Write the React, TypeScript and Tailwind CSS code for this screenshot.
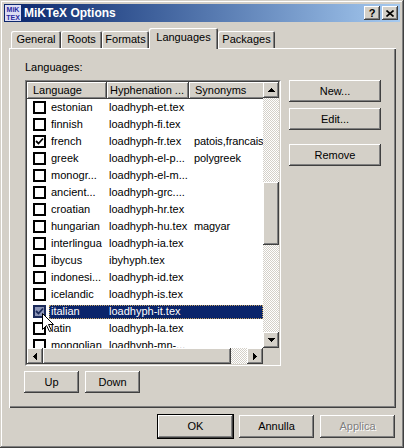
const raised =
  'bg-[#d4d0c8] shadow-[inset_-1px_-1px_#404040,inset_1px_1px_#ffffff,inset_-2px_-2px_#808080,inset_2px_2px_#d4d0c8]';
const hatch =
  'bg-[image:repeating-conic-gradient(#d4d0c8_0%_25%,#ffffff_0%_50%)] bg-[length:2px_2px]';

type Row = { lang: string; file: string; syn?: string; checked?: boolean; selected?: boolean };

const rows: Row[] = [
  { lang: 'estonian', file: 'loadhyph-et.tex' },
  { lang: 'finnish', file: 'loadhyph-fi.tex' },
  { lang: 'french', file: 'loadhyph-fr.tex', syn: 'patois,francais', checked: true },
  { lang: 'greek', file: 'loadhyph-el-p...', syn: 'polygreek' },
  { lang: 'monogr...', file: 'loadhyph-el-m...' },
  { lang: 'ancient...', file: 'loadhyph-grc....' },
  { lang: 'croatian', file: 'loadhyph-hr.tex' },
  { lang: 'hungarian', file: 'loadhyph-hu.tex', syn: 'magyar' },
  { lang: 'interlingua', file: 'loadhyph-ia.tex' },
  { lang: 'ibycus', file: 'ibyhyph.tex' },
  { lang: 'indonesi...', file: 'loadhyph-id.tex' },
  { lang: 'icelandic', file: 'loadhyph-is.tex' },
  { lang: 'italian', file: 'loadhyph-it.tex', checked: true, selected: true },
  { lang: 'latin', file: 'loadhyph-la.tex' },
  { lang: 'mongolian', file: 'loadhyph-mn-...' },
];

function Arrow({ dir }: { dir: 'up' | 'down' | 'left' | 'right' }) {
  const vertical = dir === 'up' || dir === 'down';
  return (
    <svg
      width={vertical ? 7 : 4}
      height={vertical ? 4 : 7}
      className={dir === 'down' || dir === 'left' ? 'rotate-180' : ''}
    >
      {vertical ? (
        <path d="M3 0h1v1h1v1h1v1h1v1H0V3h1V2h1V1h1z" fill="#000" />
      ) : (
        <path d="M0 0h1v1h1v1h1v1h1v1h-1v1h-1v1h-1v1H0z" fill="#000" />
      )}
    </svg>
  );
}

function ScrollBtn({ dir }: { dir: 'up' | 'down' | 'left' | 'right' }) {
  return (
    <div className={`w-[16px] h-[16px] shrink-0 flex items-center justify-center ${raised}`}>
      <Arrow dir={dir} />
    </div>
  );
}

function Button({ label, w, h = 'h-[23px]', disabled, def }: { label: string; w: string; h?: string; disabled?: boolean; def?: boolean }) {
  return (
    <div
      className={`${w} ${h} flex items-center justify-center text-[11px] ${raised} ${
        def ? 'outline outline-1 outline-black' : ''
      } ${disabled ? 'text-[#808080] [text-shadow:1px_1px_#ffffff]' : 'text-black'}`}
    >
      {label}
    </div>
  );
}

function Check({ checked, selected }: { checked?: boolean; selected?: boolean }) {
  return (
    <div
      className={`w-[13px] h-[13px] shrink-0 border-2 ${
        selected ? 'border-[#1a2a5a] bg-[#8d96b8]' : 'border-black bg-white'
      } flex items-center justify-center`}
    >
      {checked && (
        <svg width="9" height="9" viewBox="0 0 9 9">
          <polyline points="1,4 3.5,6.5 8,1.5" fill="none" stroke={selected ? '#1a2a5a' : '#000'} strokeWidth="1.8" />
        </svg>
      )}
    </div>
  );
}

function Tab({ label, selected, w }: { label: string; selected?: boolean; w: string }) {
  return (
    <div
      className={`${w} flex items-center justify-center text-[11px] bg-[#d4d0c8] rounded-t-[2px] shadow-[inset_1px_1px_#ffffff,inset_-1px_0_#404040,inset_-2px_0_#808080] ${
        selected ? 'h-[21px] -mb-[1px] relative z-10 pb-[3px]' : 'h-[17px]'
      }`}
    >
      {label}
    </div>
  );
}

export default function App() {
  return (
    <div className="relative w-[404px] h-[448px] bg-[#d4d0c8] p-[4px] font-['Liberation_Sans',Arial,sans-serif] text-black shadow-[inset_-1px_-1px_#404040,inset_1px_1px_#d4d0c8,inset_-2px_-2px_#808080,inset_2px_2px_#ffffff]">
      {/* title bar */}
      <div className="h-[18px] flex items-center bg-gradient-to-r from-[#0a246a] to-[#a6caf0] pl-[1px] pr-[2px]">
        <svg width="16" height="16" className="shrink-0">
          <rect x="0" y="0" width="16" height="16" fill="#dcdcf4" />
          <text x="8" y="7" textAnchor="middle" fontSize="7" fontWeight="bold" fill="#2a2aa0" fontFamily="Liberation Sans, Arial, sans-serif">MiK</text>
          <text x="8" y="15" textAnchor="middle" fontSize="7" fontWeight="bold" fill="#2a2aa0" fontFamily="Liberation Sans, Arial, sans-serif">TEX</text>
        </svg>
        <span className="ml-[3px] text-[12px] font-bold text-white leading-none">MiKTeX Options</span>
        <div className="ml-auto flex gap-[2px]">
          <div className={`w-[16px] h-[14px] flex items-center justify-center text-[11px] font-bold leading-none ${raised}`}>?</div>
          <div className={`w-[16px] h-[14px] flex items-center justify-center ${raised}`}>
            <svg width="8" height="7" viewBox="0 0 8 7">
              <path d="M0.5 0.5L7.5 6.5M7.5 0.5L0.5 6.5" stroke="#000" strokeWidth="1.6" />
            </svg>
          </div>
        </div>
      </div>

      {/* tabs */}
      <div className="flex items-end h-[20px] mt-[6px] pl-[7px]">
        <Tab label="General" w="w-[50px]" />
        <Tab label="Roots" w="w-[41px]" />
        <Tab label="Formats" w="w-[47px]" />
        <Tab label="Languages" w="w-[69px]" selected />
        <Tab label="Packages" w="w-[57px]" />
      </div>

      {/* panel */}
      <div className="ml-[5px] w-[387px] h-[360px] flex flex-col pl-[15px] pt-[13px] shadow-[inset_1px_1px_#ffffff,inset_-1px_-1px_#404040,inset_-2px_-2px_#808080]">
        <div className="text-[11px] leading-[13px] ml-[1px]">Languages:</div>

        <div className="flex gap-[8px] mt-[6px] ml-[1px]">
          {/* list view */}
          <div className="w-[256px] h-[286px] border border-t-[#808080] border-l-[#808080] border-b-white border-r-white">
            <div className="w-full h-full border border-t-[#404040] border-l-[#404040] border-b-[#d4d0c8] border-r-[#d4d0c8] bg-white flex flex-col">
              <div className="flex h-[266px]">
                <div className="w-[236px] overflow-hidden flex flex-col text-[11px]">
                  <div className="flex h-[17px] shrink-0">
                    <div className={`w-[80px] shrink-0 flex items-center pl-[6px] ${raised}`}>Language</div>
                    <div className={`w-[82px] shrink-0 flex items-center pl-[3px] ${raised}`}>Hyphenation ...</div>
                    <div className={`w-[90px] shrink-0 flex items-center pl-[6px] ${raised}`}>Synonyms</div>
                  </div>
                  {rows.map((r) => (
                    <div key={r.lang} className="flex items-center h-[17px] shrink-0 whitespace-nowrap">
                      <div className="w-[22px] pl-[6px] shrink-0">
                        <Check checked={r.checked} selected={r.selected} />
                      </div>
                      <div
                        className={`flex h-[14px] items-center ${
                          r.selected ? 'bg-[#0a246a] text-white outline outline-1 outline-dotted outline-[#c0a060] -outline-offset-1' : ''
                        }`}
                      >
                        <div className="w-[58px] shrink-0 pl-[2px] overflow-hidden">{r.lang}</div>
                        <div className="w-[82px] shrink-0 pl-[2px] overflow-hidden">{r.file}</div>
                        <div className="w-[74px] shrink-0 pl-[5px] overflow-hidden tracking-[-0.1px]">{r.syn ?? ''}</div>
                      </div>
                    </div>
                  ))}
                </div>
                {/* vertical scrollbar */}
                <div className={`w-[16px] flex flex-col ${hatch}`}>
                  <ScrollBtn dir="up" />
                  <div className="h-[84px]" />
                  <div className={`h-[63px] ${raised}`} />
                  <div className="flex-1" />
                  <ScrollBtn dir="down" />
                </div>
              </div>
              {/* horizontal scrollbar */}
              <div className="flex h-[16px]">
                <div className={`w-[236px] flex ${hatch}`}>
                  <ScrollBtn dir="left" />
                  <div className={`w-[188px] ${raised}`} />
                  <div className="flex-1" />
                  <ScrollBtn dir="right" />
                </div>
                <div className="w-[16px] bg-[#d4d0c8]" />
              </div>
            </div>
          </div>

          {/* side buttons */}
          <div className="flex flex-col">
            <Button label="New..." w="w-[92px]" h="h-[22px]" />
            <div className="mt-[6px]">
              <Button label="Edit..." w="w-[92px]" h="h-[22px]" />
            </div>
            <div className="mt-[14px]">
              <Button label="Remove" w="w-[92px]" h="h-[22px]" />
            </div>
          </div>
        </div>

        <div className="flex gap-[6px] mt-[5px]">
          <Button label="Up" w="w-[55px]" h="h-[22px]" />
          <Button label="Down" w="w-[55px]" h="h-[22px]" />
        </div>
      </div>

      {/* dialog buttons */}
      <div className="flex justify-end gap-[6px] mt-[7px] pr-[5px]">
        <Button label="OK" w="w-[75px]" def />
        <Button label="Annulla" w="w-[75px]" />
        <Button label="Applica" w="w-[75px]" disabled />
      </div>

      {/* mouse pointer */}
      <svg width="13" height="20" className="absolute left-[42px] top-[313px]">
        <path d="M0.5 0.5L0.5 16.5L4.5 12.5L7.5 18.5L9.5 17.5L6.5 11.5L11.5 11.5Z" fill="#fff" stroke="#000" strokeWidth="1" />
      </svg>
    </div>
  );
}
